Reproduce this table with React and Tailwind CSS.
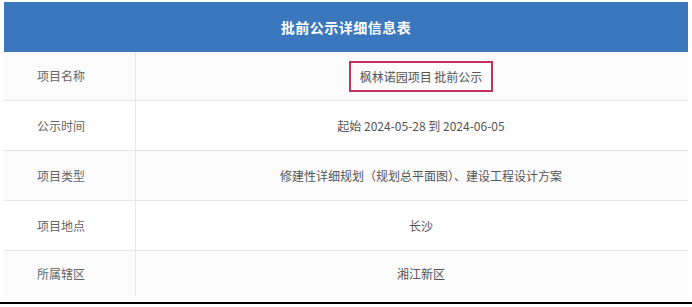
import React from "react";

const rows = [
  { label: "项目名称", value: "枫林诺园项目 批前公示", boxed: true, h: "h-[49px]" },
  { label: "公示时间", value: "起始 2024-05-28 到 2024-06-05", h: "h-[50px]" },
  { label: "项目类型", value: "修建性详细规划（规划总平面图）、建设工程设计方案", h: "h-[50px]" },
  { label: "项目地点", value: "长沙", h: "h-[50px]" },
  { label: "所属辖区", value: "湘江新区", h: "h-[45px]" },
];

const App = () => {
  return (
    <div
      className="w-[692px] h-[307px] bg-white overflow-hidden flex flex-col"
      style={{ fontFamily: '"Noto Sans CJK SC", "Noto Sans", sans-serif' }}
    >
      <div className="pt-[2px] px-[4px]">
        {/* Header */}
        <div className="h-[50px] bg-[#3a77bd] flex items-center justify-center">
          <span className="text-white text-[14px] font-bold tracking-[0.5px]">批前公示详细信息表</span>
        </div>

        {/* Rows */}
        {rows.map((row, i) => (
          <div
            key={row.label}
            className={`flex ${row.h} ${i < rows.length - 1 ? "border-b border-[#e6e6e6]" : ""} ${i % 2 === 0 ? "bg-[#fbfbfb]" : "bg-white"}`}
          >
            <div className="w-[132px] border-r border-[#e6e6e6] flex items-center pl-[33px] text-[12px] text-[#666]">
              {row.label}
            </div>
            <div className="flex-1 flex items-center justify-center pl-[18px] text-[12px] text-[#555]">
              {row.boxed ? (
                <span className="border-2 border-[#c3325c] px-[9px] py-[5px] leading-[17px]">{row.value}</span>
              ) : (
                row.value
              )}
            </div>
          </div>
        ))}
      </div>
      <div className="mt-[6px] h-[2px] bg-black" />
    </div>
  );
};

export default App;
